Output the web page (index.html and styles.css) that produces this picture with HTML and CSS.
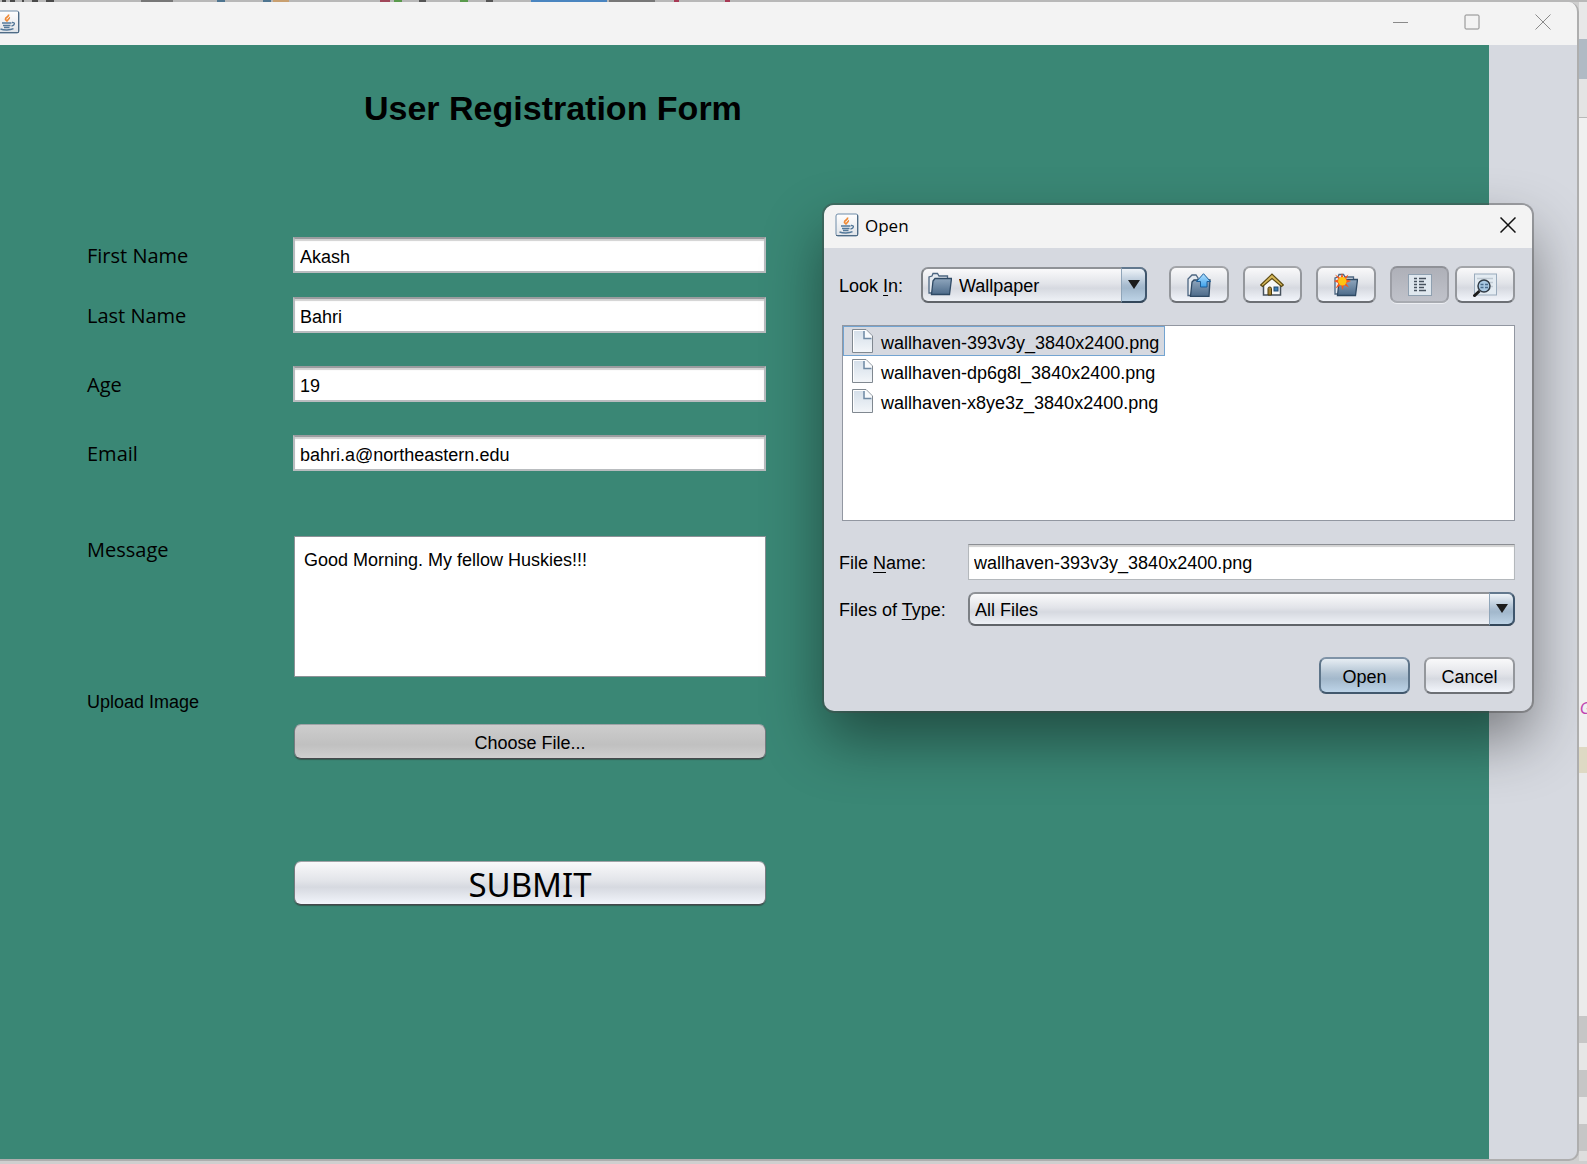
FILE: index.html
```html
<!DOCTYPE html>
<html lang="en">
<head>
<meta charset="utf-8">
<title>User Registration Form</title>
<link rel="stylesheet" href="styles.css">
</head>
<body>
<svg class="defs" aria-hidden="true">
  <defs>
    <linearGradient id="steel" x1="0" y1="0" x2="0" y2="1"><stop offset="0" stop-color="#8fa6bd"/><stop offset="1" stop-color="#4d6b8a"/></linearGradient>
    <linearGradient id="sky" x1="0" y1="0" x2="0" y2="1"><stop offset="0" stop-color="#b5e2ff"/><stop offset="1" stop-color="#3ba0ea"/></linearGradient>
    <linearGradient id="paper" x1="0" y1="0" x2="0" y2="1"><stop offset="0" stop-color="#d3dee9"/><stop offset="1" stop-color="#f3f6f9"/></linearGradient>
    <linearGradient id="tile" x1="0" y1="0" x2="0" y2="1"><stop offset="0" stop-color="#ffffff"/><stop offset="1" stop-color="#dfe3e8"/></linearGradient>
    <symbol id="java" viewBox="0 0 24 24">
      <rect x="1" y="1" width="22" height="22" rx="2" fill="url(#tile)" stroke="#6f8ca8" stroke-width="1"/>
      <path d="M1 22.500H22.500V2" fill="none" stroke="#4f6b85" stroke-width="1"/>
      <path d="M12.500 4.500C13.500 7 9 7 9.500 9.500L11.500 11.500C10.500 9.500 14.500 8.500 13 7.500" fill="none" stroke="#f08a35" stroke-width="1.700"/>
      <path d="M6 13H15.500M7 15.500H14.500M8 17.500H13.500M16 12.500C19.500 12 19 15.500 15.500 16M4.500 19C8 20.300 14 20.300 17.500 18.700" fill="none" stroke="#54799a" stroke-width="1.400"/>
    </symbol>
    <symbol id="folder" viewBox="0 0 24 24">
      <path d="M1 21V5L4 4L5 1.500H9.500L11 4H19.500V21Z" fill="#e5eaf0" stroke="#4c6580" stroke-width="1.300"/>
      <path d="M5 9L7 6.500H23.500L21.500 22.500H3.500Z" fill="url(#steel)" stroke="#2f4a65" stroke-width="1.300"/>
    </symbol>
    <symbol id="doc" viewBox="0 0 24 24">
      <path d="M1.500 0.500H15L21.500 7V23.500H1.500Z" fill="url(#paper)" stroke="#808890"/>
      <path d="M2.500 22.500V1.500H14" fill="none" stroke="#fff" stroke-width="1"/>
      <path d="M13.500 1V10H21V7L15 1Z" fill="#f8fafc"/>
      <path d="M13 2V9.500H20.500" fill="none" stroke="#6f8aa5" stroke-width="1.500"/>
    </symbol>
  </defs>
</svg>
<div class="desktop">
  <div class="behind-top" aria-hidden="true"></div>
  <main class="window">
    <header class="titlebar">
      <svg class="app-icon" width="24" height="24" role="img" aria-label="Java"><use href="#java"/></svg>
      <div class="controls">
        <button type="button" aria-label="Minimize"><svg width="16" height="16"><path d="M0 8.500H15"/></svg></button>
        <button type="button" aria-label="Maximize"><svg width="16" height="16"><rect x="1" y="1" width="14" height="14" rx="1"/></svg></button>
        <button type="button" aria-label="Close"><svg width="16" height="16"><path d="M0.500 0.500L15.500 15.500M15.500 0.500L0.500 15.500"/></svg></button>
      </div>
    </header>
    <div class="client">
      <form class="panel">
        <h1>User Registration Form</h1>
        <div class="row"><label for="first">First Name</label><input id="first" type="text" value="Akash"></div>
        <div class="row near"><label for="last">Last Name</label><input id="last" type="text" value="Bahri"></div>
        <div class="row"><label for="age">Age</label><input id="age" type="text" value="19"></div>
        <div class="row"><label for="email">Email</label><input id="email" type="text" value="bahri.a@northeastern.edu"></div>
        <div class="row message"><label for="message">Message</label><textarea id="message">Good Morning. My fellow Huskies!!!</textarea></div>
        <div class="row upload"><label for="choose">Upload Image</label><button id="choose" class="btn choose" type="button">Choose File...</button></div>
        <div class="row send"><button class="btn submit" type="button">SUBMIT</button></div>
      </form>
    </div>
    <section class="dialog" role="dialog" aria-label="Open">
      <header class="dialog-title">
        <svg width="24" height="24" aria-hidden="true"><use href="#java"/></svg>
        <h2>Open</h2>
        <button type="button" aria-label="Close dialog"><svg width="16" height="16"><path d="M0.500 0.500L15.500 15.500M15.500 0.500L0.500 15.500"/></svg></button>
      </header>
      <div class="dialog-body">
        <div class="toolbar">
          <label for="look">Look <u>I</u>n:</label>
          <div class="combo look">
            <svg class="combo-icon" width="24" height="24" aria-hidden="true"><use href="#folder"/></svg>
            <select id="look"><option>Wallpaper</option></select>
            <span class="arrow"><svg width="12" height="10"><path d="M0 0H12L6 9Z"/></svg></span>
          </div>
          <div class="tools">
            <button class="btn" type="button" aria-label="Up one level"><svg width="24" height="24" viewBox="0 0 24 24"><path d="M1 22.500V6L3 4L5 2H9L11 5V22.500Z" fill="#e5eaf0" stroke="#4c6580" stroke-width="1.300"/><path d="M5 9L7 7H23L22 23.300H3.500Z" fill="url(#steel)" stroke="#2f4a65" stroke-width="1.300"/><path d="M16.500 .7L23.500 8.500H20V14H13.500V8.500H9.500Z" fill="url(#sky)" stroke="#1c5f9b"/></svg></button>
            <button class="btn" type="button" aria-label="Home"><svg width="24" height="24" viewBox="0 0 24 24"><path d="M3.500 11L12 4L20.500 11V22H3.500Z" fill="#f8f8f8" stroke="#45505c" stroke-width="1.500"/><path d="M.7 12L12 1L23.300 12L21.500 13.500L12 5.500L2.500 13.500Z" fill="#d8b95a" stroke="#5c4a12" stroke-width="1.200"/><path d="M8 22V15.500Q8 14 9.700 14Q11.500 14 11.500 15.500V22Z" fill="#a78535" stroke="#4c3c0c"/><rect x="14" y="14" width="4" height="4" fill="#3f7fb5" stroke="#234a70"/></svg></button>
            <button class="btn" type="button" aria-label="New folder"><svg width="24" height="24" viewBox="0 0 24 24"><use href="#folder" width="24" height="24"/><path d="M8 0L9.500 5L14.500 1.500L12 6.200L17 8L12 10L15 14.500L10 12L8.500 17L7 12L1.500 15.500L4.500 10.200L0 8L4.500 6.200L1 1.500L6.500 5Z" fill="#f9571c"/><circle cx="8.300" cy="8.200" r="4.200" fill="#ffc412"/></svg></button>
            <button class="btn pressed" type="button" aria-label="List view" aria-pressed="true"><svg width="24" height="24" viewBox="0 0 24 24"><rect x=".5" y="1.500" width="23" height="21" fill="#dfe7ee" stroke="#8fa0b0"/><path d="M6 5.500H9M6 8.500H9M6 11.500H9M6 14.500H9M6 17.500H9M11 5.500H18M11 8.500H16M11 11.500H18M11 14.500H16M11 17.500H18" stroke="#47525e" stroke-width="1.500"/></svg></button>
            <button class="btn" type="button" aria-label="Details view"><svg width="24" height="24" viewBox="0 0 24 24"><rect x="1.500" y="1" width="22" height="21" fill="#e3ebf2" stroke="#9aabbc"/><path d="M4 5.500H20M17 9.500H20M18 13.500H20" stroke="#c0cad4" stroke-width="1.500"/><path d="M6.500 18L.5 23.500" stroke="#1b1b1b" stroke-width="3"/><circle cx="11" cy="13" r="6" fill="#a9c8e2" stroke="#303a44" stroke-width="1.500"/><path d="M7.500 11.500H10.500M12 11.500H15M7.500 14.500H10.500M12 14.500H15" stroke="#4b6c8c" stroke-width="1.500"/></svg></button>
          </div>
        </div>
        <ul class="files">
          <li class="selected"><svg width="24" height="24" aria-hidden="true"><use href="#doc"/></svg><span>wallhaven-393v3y_3840x2400.png</span></li>
          <li><svg width="24" height="24" aria-hidden="true"><use href="#doc"/></svg><span>wallhaven-dp6g8l_3840x2400.png</span></li>
          <li><svg width="24" height="24" aria-hidden="true"><use href="#doc"/></svg><span>wallhaven-x8ye3z_3840x2400.png</span></li>
        </ul>
        <div class="fields">
          <label for="file">File <u>N</u>ame:</label>
          <input id="file" type="text" value="wallhaven-393v3y_3840x2400.png">
          <label for="type">Files of <u>T</u>ype:</label>
          <div class="combo type">
            <select id="type"><option>All Files</option></select>
            <span class="arrow"><svg width="12" height="10"><path d="M0 0H12L6 9Z"/></svg></span>
          </div>
        </div>
        <div class="actions">
          <button class="btn primary" type="button">Open</button>
          <button class="btn" type="button">Cancel</button>
        </div>
      </div>
    </section>
  </main>
  <div class="behind-right" aria-hidden="true"><span>G</span></div>
</div>
</body>
</html>
```
FILE: styles.css
```css
* { box-sizing: border-box; }

body {
  margin: 0;
  font: 18px/24px "Liberation Sans", Arial, sans-serif;
  color: #000;
}

button, input, select, textarea { font: inherit; color: inherit; }
h1, h2, ul { margin: 0; padding: 0; }
.defs { position: absolute; width: 0; height: 0; }

.desktop {
  display: grid;
  grid-template: 2px 1fr / 1fr 8px;
  min-height: 100vh;
  padding-bottom: 3px;
  background: #cfcfcf;
}

.behind-top {
  grid-column: 1 / -1;
  background:
    linear-gradient(#4a4a4a, #4a4a4a) 2px 0 / 4px 2px no-repeat,
    linear-gradient(#4a4a4a, #4a4a4a) 10px 0 / 5px 2px no-repeat,
    linear-gradient(#4a4a4a, #4a4a4a) 22px 0 / 2px 2px no-repeat,
    linear-gradient(#4a4a4a, #4a4a4a) 32px 0 / 6px 2px no-repeat,
    linear-gradient(#4a4a4a, #4a4a4a) 46px 0 / 8px 2px no-repeat,
    linear-gradient(#777, #777) 141px 0 / 32px 2px no-repeat,
    linear-gradient(#4f7590, #4f7590) 217px 0 / 8px 2px no-repeat,
    linear-gradient(#4f7590, #4f7590) 263px 0 / 8px 2px no-repeat,
    linear-gradient(#c9a070, #c9a070) 273px 0 / 16px 2px no-repeat,
    linear-gradient(#a0485a, #a0485a) 380px 0 / 10px 2px no-repeat,
    linear-gradient(#5a9a4c, #5a9a4c) 394px 0 / 8px 2px no-repeat,
    linear-gradient(#555, #555) 419px 0 / 7px 2px no-repeat,
    linear-gradient(#5a9a4c, #5a9a4c) 460px 0 / 8px 2px no-repeat,
    linear-gradient(#555, #555) 486px 0 / 7px 2px no-repeat,
    linear-gradient(#4a85c0, #4a85c0) 531px 0 / 76px 2px no-repeat,
    linear-gradient(#777, #777) 609px 0 / 46px 2px no-repeat,
    linear-gradient(#a83a55, #a83a55) 674px 0 / 5px 2px no-repeat,
    linear-gradient(#a83a55, #a83a55) 725px 0 / 5px 2px no-repeat,
    #b8b8b8;
}

.behind-right {
  overflow: hidden;
  padding: 695px 0 0 1px;
  background: linear-gradient(
    #e8e8e8 37px, #b0bac4 37px 77px, #e4e4e4 77px 115px, #b8b8b8 115px 116px,
    #f0f0f0 116px 745px, #ded9c4 745px 771px, #ebebeb 771px 1014px,
    #c6c6c6 1014px 1041px, #e6e6e6 1041px 1068px, #c6c6c6 1068px 1095px,
    #e6e6e6 1095px 1122px, #c6c6c6 1122px 1149px, #dedede 1149px);
}
.behind-right span {
  display: block;
  font: italic 16px/24px "Liberation Sans", Arial, sans-serif;
  color: #c045b0;
}

/* Main window */
.window {
  position: relative;
  display: flex;
  flex-direction: column;
  border: solid #aeaeae;
  border-width: 0 2px 2px 0;
  border-radius: 0 10px 10px 0;
  background: #d6d9e0;
  overflow: hidden;
}
.titlebar {
  display: flex;
  justify-content: space-between;
  align-items: center;
  height: 43px;
  padding-bottom: 3px;
  background: #f3f3f3;
}
.app-icon { margin-left: -4px; }
.controls { display: flex; gap: 22px; padding-right: 10px; }
.controls button, .dialog-title button {
  display: grid;
  place-items: center;
  width: 49px;
  height: 32px;
  padding: 0;
  border: 0;
  background: none;
}
.controls svg { fill: none; stroke: #8a8a8a; stroke-width: 1; }
.client { flex: 1; display: flex; padding-right: 88px; }

/* Registration form */
.panel { flex: 1; padding: 39px 0 100px 87px; background: #3a8775; }
.panel h1 {
  margin-bottom: 105px;
  padding-left: 277px;
  font-size: 34px;
  line-height: 48px;
}
.row {
  display: grid;
  grid-template-columns: 206px 473px;
  align-items: center;
  margin-bottom: 33px;
}
.row:has(+ .near) { margin-bottom: 24px; }
.row label { padding-top: 2px; font: 20px/34px "Open Sans", "Noto Sans", sans-serif; }
input {
  width: 100%;
  height: 36px;
  padding: 2px 5px 0;
  border: 1px solid #b4b8bc;
  border-top-color: #8c8f94;
  border-radius: 0;
  background: #fff;
  box-shadow: inset 0 2px 1px #d2d2d2;
  outline: 0;
}
.row input { padding-top: 4px; border-width: 2px; border-color: #9a9c9f #b9bcbf #b9bcbf; }
.message { align-items: start; margin: 65px 0 0; }
.message label { padding-top: 0; line-height: 28px; }
textarea {
  display: block;
  width: 472px;
  height: 141px;
  margin-left: 1px;
  padding: 11px 9px;
  border: 1px solid #8c9196;
  border-radius: 0;
  background: #fff;
  outline: 0;
  resize: none;
}
.upload { align-items: start; margin: 12px 0 0; }
.row.upload label { padding-top: 0; font: 18px/26px "Liberation Sans", Arial, sans-serif; }
.btn {
  display: grid;
  place-items: center;
  padding: 0;
  border: 2px solid;
  border-color: #a3a5a9 #94979c #6d7075;
  border-radius: 7px;
  background: linear-gradient(#f9f9fa, #e2e4e9 45%, #d6d9e0 60%, #f2f5fb);
}
.row .btn { width: 472px; margin-left: 1px; border-width: 1px; border-color: #9fa2a6 #777b80 #45484c; box-shadow: 0 1px 1px #35594f; }
.row .choose { height: 35px; margin-top: 35px; padding-top: 2px; background: linear-gradient(#cdcdcd, #c0c0c0 60%, #cfcfcf); }
.send { margin: 102px 0 0; }
.row .submit { grid-column: 2; height: 44px; padding-top: 3px; font: 33px/39px "Noto Sans", "Open Sans", sans-serif; }

/* File chooser */
.dialog {
  position: absolute;
  top: 203px;
  right: 45px;
  width: 708px;
  border-radius: 10px;
  background: #d6d9e0;
  box-shadow: 0 0 0 2px rgba(70, 70, 70, .4), 0 28px 60px rgba(0, 0, 0, .44);
}
.dialog-title {
  display: flex;
  align-items: center;
  gap: 6px;
  height: 43px;
  padding: 0 0 3px 11px;
  border-radius: 10px 10px 0 0;
  background: #f3f3f3;
}
.dialog-title h2 { flex: 1; padding-top: 2px; font: 17px/24px "Open Sans", "Noto Sans", sans-serif; }
.dialog-title svg path { fill: none; }
.dialog-title button svg { stroke: #111; stroke-width: 1.500; }
.dialog-body { padding: 18px 17px 17px 15px; }
u { text-underline-offset: 3px; }

.toolbar { display: flex; align-items: center; }
.toolbar label { width: 82px; padding-top: 2px; }
.combo { position: relative; height: 36px; }
.combo.look { width: 226px; margin-right: 22px; }
.combo.type { height: 34px; }
.combo select {
  width: 100%;
  height: 100%;
  padding: 2px 34px 0 5px;
  appearance: none;
  border: 2px solid;
  border-color: #8f9297 #7c8085 #606469;
  border-radius: 7px;
  background: linear-gradient(#fafafb, #e2e4e9 45%, #d6d9e0 60%, #eef1f6);
}
.combo.look select { padding-left: 36px; }
.combo-icon { position: absolute; left: 7px; top: 5px; pointer-events: none; }
.arrow {
  position: absolute;
  top: 0;
  right: 0;
  display: grid;
  place-items: center;
  width: 26px;
  height: 100%;
  border: 2px solid;
  border-color: #62788e #3f566d #33475a #8fa5b9;
  border-left-width: 1px;
  border-radius: 0 7px 7px 0;
  background: linear-gradient(#eef3f8, #a9bdd0 50%, #a2b8cc 60%, #bdd3e6);
  pointer-events: none;
}
.arrow svg { fill: #1c1c1c; }
.tools { flex: 1; display: flex; gap: 14px; }
.tools .btn { flex: 1; height: 37px; }
.tools .btn:last-child { margin-left: -8px; }
.tools .pressed {
  border-color: #8f9197 #9c9ea5 #a8abb1;
  background: linear-gradient(#aeb0b8, #c0c2ca);
  box-shadow: 0 1px 0 #eceef2;
}

.files {
  height: 196px;
  margin: 22px 0 23px 3px;
  border: 1px solid #9297a1;
  background: #fff;
  list-style: none;
}
.files li {
  display: flex;
  align-items: center;
  gap: 6px;
  width: 322px;
  height: 30px;
  padding: 0 0 0 8px;
}
.files span { padding-top: 4px; }
.files .selected { background: #d6d9e0; outline: 1px solid #73a4d1; outline-offset: -1px; }

.fields {
  display: grid;
  grid-template-columns: 129px 1fr;
  row-gap: 12px;
  align-items: center;
}
.fields label { padding-top: 2px; }
.actions { display: flex; justify-content: flex-end; gap: 14px; margin-top: 31px; }
.actions .btn { width: 91px; height: 37px; padding-top: 2px; }
.actions .primary {
  border-color: #7f93a7 #5d7489 #42586d;
  background: linear-gradient(#e6edf3, #b0c2d2 45%, #a3b8cb 60%, #bdd4e8);
}
```
